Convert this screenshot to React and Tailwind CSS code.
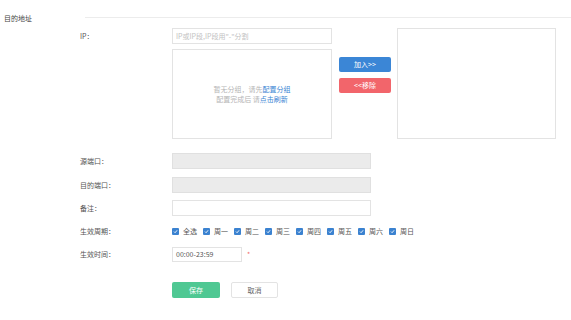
import React from 'react';

const font = { fontFamily: '"Noto Sans CJK SC", "Noto Sans", sans-serif' };

const days = ['全选', '周一', '周二', '周三', '周四', '周五', '周六', '周日'];

function Check({ label }) {
    return (
        <div className="flex items-center">
            <span className="w-[7px] h-[7px] rounded-[1px] bg-[#3b82d0] flex items-center justify-center">
                <svg width="5" height="5" viewBox="0 0 10 10">
                    <path d="M2 5.2 L4.2 7.4 L8.2 2.6" stroke="#fff" strokeWidth="1.8" fill="none" />
                </svg>
            </span>
            <span className="ml-[4px] mr-[6px] w-[14px] text-[#555] leading-[8px]">{label}</span>
        </div>
    );
}

function Label({ children }) {
    return (
        <div className="w-[172px] pl-[80px] shrink-0 text-[#555] leading-[16px]">{children}</div>
    );
}

export default function App() {
    return (
        <div className="w-[571px] h-[320px] bg-white text-[7px] overflow-hidden" style={font}>
            {/* 标题 */}
            <div className="flex items-start pt-[14px]">
                <div className="w-[85px] pl-[4px] text-[#444] leading-[8px] shrink-0">目的地址</div>
                <div className="flex-1 mt-[3px] border-t border-[#ececec]"></div>
            </div>

            {/* IP */}
            <div className="flex mt-[6px]">
                <Label>IP：</Label>
                <div className="w-[160px] flex flex-col">
                    <div className="h-[16px] border border-[#e3e3e3] px-[3px] text-[#c2c2c2] leading-[14px]">
                        IP或IP段,IP段用"-"分割
                    </div>
                    <div className="mt-[5px] h-[90px] border border-[#e3e3e3] flex flex-col items-center justify-center text-[#b5b5b5] leading-[10px]">
                        <div>暂无分组，请先<span className="text-[#3a86d4]">配置分组</span></div>
                        <div>配置完成后 请<span className="text-[#3a86d4]">点击刷新</span></div>
                    </div>
                </div>
                <div className="w-[52px] ml-[7px] flex flex-col">
                    <button className="mt-[29px] h-[15px] rounded-[2px] bg-[#3b86d6] text-white leading-[15px]">加入&gt;&gt;</button>
                    <button className="mt-[6px] h-[15px] rounded-[2px] bg-[#f2656b] text-white leading-[15px]">&lt;&lt;移除</button>
                </div>
                <div className="ml-[6px] w-[159px] h-[111px] border border-[#e3e3e3]"></div>
            </div>

            {/* 源端口 */}
            <div className="flex mt-[14px]">
                <Label>源端口：</Label>
                <div className="w-[199px] h-[16px] border border-[#e0e0e0] bg-[#ebebeb]"></div>
            </div>

            {/* 目的端口 */}
            <div className="flex mt-[8px]">
                <Label>目的端口：</Label>
                <div className="w-[199px] h-[16px] border border-[#e0e0e0] bg-[#ebebeb]"></div>
            </div>

            {/* 备注 */}
            <div className="flex mt-[7px]">
                <Label>备注：</Label>
                <div className="w-[199px] h-[16px] border border-[#e3e3e3] bg-white"></div>
            </div>

            {/* 生效周期 */}
            <div className="flex items-center mt-[10px] h-[10px]">
                <div className="w-[172px] pl-[80px] shrink-0 text-[#555] leading-[10px]">生效周期：</div>
                <div className="flex items-center">
                    {days.map((d) => (
                        <Check key={d} label={d} />
                    ))}
                </div>
            </div>

            {/* 生效时间 */}
            <div className="flex items-center mt-[11px]">
                <div className="w-[172px] pl-[80px] shrink-0 text-[#555] leading-[15px]">生效时间：</div>
                <div className="w-[70px] h-[15px] border border-[#e3e3e3] px-[3px] text-[#555] leading-[13px]">00:00-23:59</div>
                <span className="ml-[5px] text-[#f26b6b] leading-[15px]">*</span>
            </div>

            {/* 按钮 */}
            <div className="flex mt-[20px] pl-[172px]">
                <button className="w-[48px] h-[16px] rounded-[2px] bg-[#4fc893] text-white leading-[16px]">保存</button>
                <button className="ml-[11px] w-[47px] h-[16px] rounded-[2px] border border-[#e3e3e3] bg-white text-[#666] leading-[14px]">取消</button>
            </div>
        </div>
    );
}
